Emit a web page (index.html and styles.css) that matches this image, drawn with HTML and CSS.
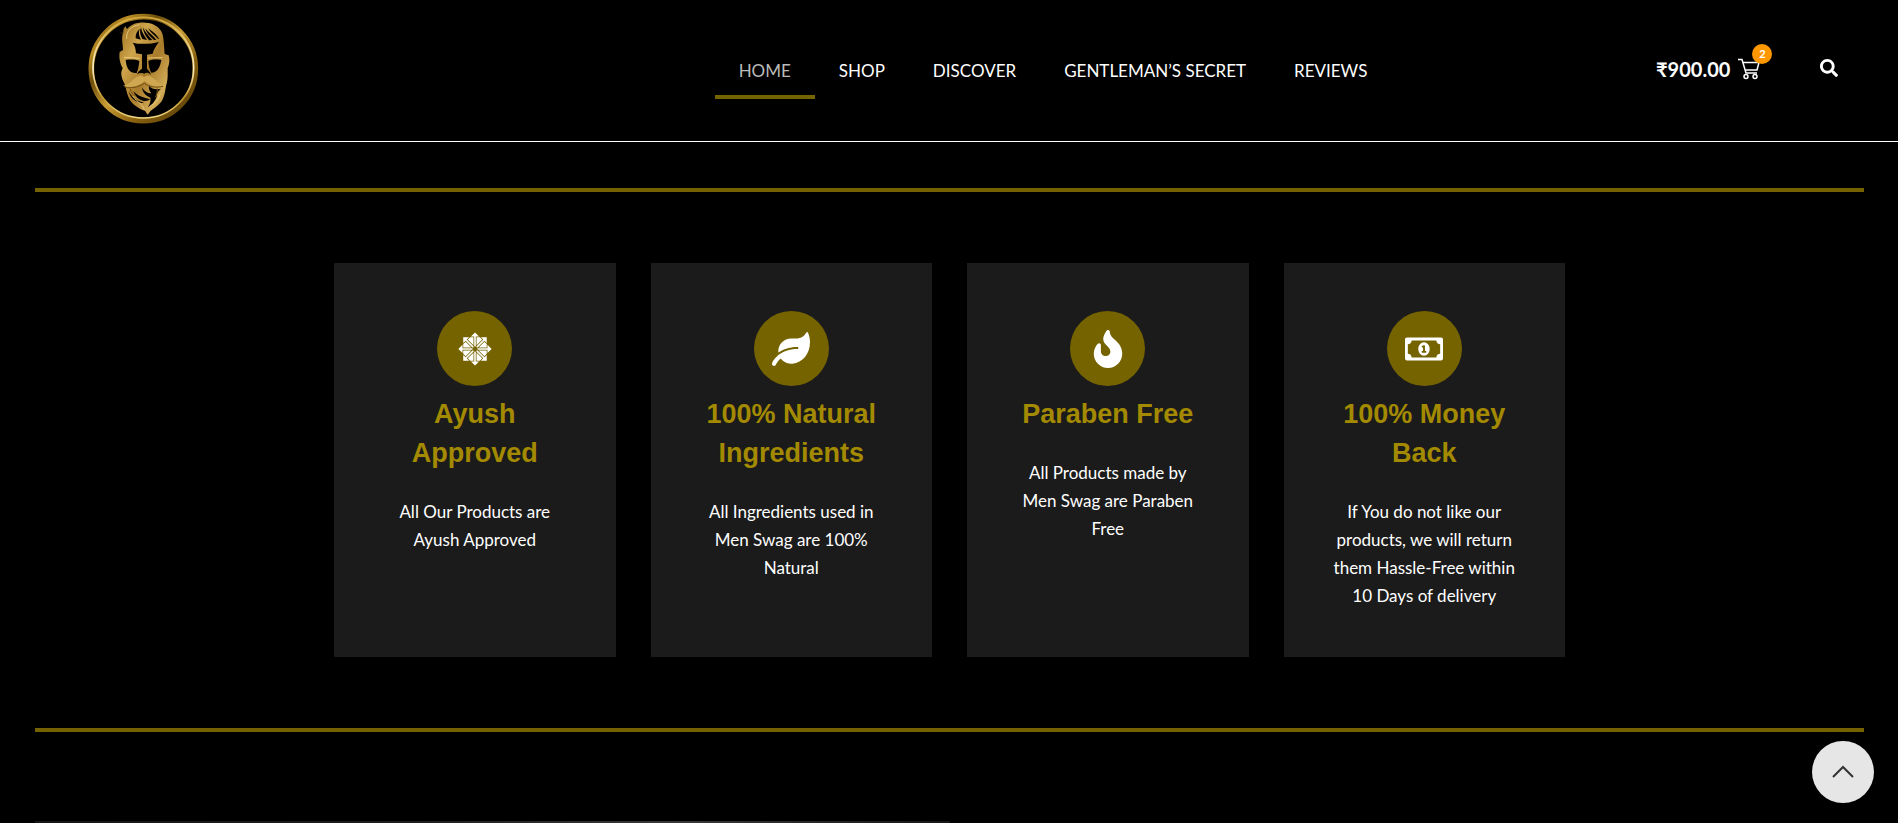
FILE: index.html
```html
<!DOCTYPE html>
<html lang="en">
<head>
<meta charset="utf-8">
<title>Men Swag</title>
<link rel="stylesheet" href="styles.css">
</head>
<body>
<header class="header">
  <a class="logo" href="#" aria-label="Men Swag">
    <svg viewBox="0 0 375 375" aria-hidden="true">
      <defs>
        <linearGradient id="ring" x1="0" y1="0" x2="1" y2="1">
          <stop offset="0" stop-color="#7a570c"/><stop offset=".18" stop-color="#b98c24"/><stop offset=".32" stop-color="#6d4e0a"/>
          <stop offset=".5" stop-color="#c89c34"/><stop offset=".7" stop-color="#8a6210"/><stop offset="1" stop-color="#4f3805"/>
        </linearGradient>
        <linearGradient id="shine" x1="0" y1="0" x2="0" y2="1">
          <stop offset="0" stop-color="#d0a73c"/><stop offset=".5" stop-color="#fff3c4"/><stop offset=".8" stop-color="#c2952c"/><stop offset="1" stop-color="#f0da86"/>
        </linearGradient>
        <linearGradient id="face" x1="0" y1="0" x2="1" y2="1">
          <stop offset="0" stop-color="#94681a"/><stop offset=".3" stop-color="#cfa54c"/><stop offset=".55" stop-color="#a87b2a"/><stop offset=".8" stop-color="#d3ac58"/><stop offset="1" stop-color="#8d6314"/>
        </linearGradient>
      </defs>
      <circle cx="190" cy="191" r="156" fill="none" stroke="url(#ring)" stroke-width="17"/>
      <circle cx="190" cy="188" r="151" fill="none" stroke="url(#shine)" stroke-width="5"/>
      <path fill="url(#face)" d="M116 84l14-1c-1-10 2-16 8-20-1 6 1 8 4 8 12-14 32-20 54-18 24 1 42 12 50 30 6 14 6 44 8 64l12 4c4 14 2 28-3 38v22c0 12-2 22-5 32-2 14-4 30-12 44-10 14-26 24-34 30l-9 12-8-12c-12-4-32-14-44-30-9-14-12-30-15-46-7-14-13-24-12-40l4-12c-7-12-12-30-9-48l10-6c0-18-6-36 0-50z"/>
      <g fill="#020100">
        <path d="M158 113c20 5 54 5 79-2-10 12-16 24-19 35l-17 3v42c8 9 12 14 12 18-8-6-14-7-20-3-7-3-15-2-22 2 3-8 7-12 15-17v-43l-18-3c-1-13-3-24-10-32z"/>
        <path d="M137 165c12-2 30-2 41 3-2 18-4 28-8 36-18 2-31-11-33-39zM205 168c12-5 25-5 39-3-4 24-13 38-30 38-5-8-8-20-9-35z"/>
        <path d="M167 100c-1-12 4-22 12-28-4 10-3 20 4 32zM187 102c-7-12-9-24-4-35 2 13 9 24 18 38zM207 106c-11-13-18-26-18-39 6 14 17 26 28 38zM222 105c-12-10-23-22-27-36 10 12 23 22 34 35zM235 102c-10-9-24-20-31-32 12 9 25 16 33 32z"/>
        <path d="M145 258c11 20 25 29 48 36-19 0-39-7-48-36zM160 258c12 14 28 20 50 24-5 6-13 7-22 5-14-4-22-13-28-29zM186 247c7 13 17 18 28 18-6-8-9-15-7-23 8 10 22 13 36 9-10 9-14 15-13 25-6 14-14 25-26 30 6-10 9-19 7-28-14-6-23-14-25-31z"/>
      </g>
      <path fill="#cfa750" d="M129 242c22-4 25-18 43-27 9-5 16-3 20 2 6-6 14-7 23-1 14 10 20 22 40 23-17 9-41 6-61-10-19 16-45 21-65 13z"/>
      <path fill="none" stroke="#6e4d10" stroke-width="3" d="M134 247c22 4 42-1 59-12 16 11 36 14 56 9M150 252c4 10 8 16 14 20M232 250c0 12-2 20-7 27"/>
      <g fill="none" stroke="#e8c878" stroke-width="3"><path d="M140 101c-2-22 13-38 39-42M132 157l47 3M204 159l44-1M158 273c18 24 28 20 35 42M240 268c-5 18-16 28-31 36"/></g>
    </svg>
  </a>
  <nav class="nav" aria-label="Main">
    <a class="nav-link current" href="#">HOME</a>
    <a class="nav-link" href="#">SHOP</a>
    <a class="nav-link" href="#">DISCOVER</a>
    <a class="nav-link" href="#">GENTLEMAN’S SECRET</a>
    <a class="nav-link" href="#">REVIEWS</a>
  </nav>
  <div class="tools">
    <a class="cart" href="#" aria-label="Cart, 2 items">
      <span>₹900.00</span>
      <span class="cart-icon">
        <svg viewBox="0 0 22 22" fill="none" stroke="currentColor" stroke-width="1.5" aria-hidden="true"><path d="M0 1.500h4l4 13.500h11M5 4.500h16l-2 7.500H7"/><circle cx="8" cy="18.500" r="2"/><circle cx="17" cy="18.500" r="2"/></svg>
        <span class="badge">2</span>
      </span>
    </a>
    <button class="search" type="button" aria-label="Search">
      <svg viewBox="0 0 512 512" fill="currentColor" aria-hidden="true"><path d="M505 442.7L405.3 343c-4.500-4.500-10.600-7-17-7H372c27.600-35.300 44-79.700 44-128C416 93.100 322.900 0 208 0S0 93.100 0 208s93.100 208 208 208c48.300 0 92.700-16.400 128-44v16.300c0 6.400 2.500 12.500 7 17l99.700 99.700c9.400 9.400 24.600 9.400 33.900 0l28.300-28.300c9.400-9.400 9.400-24.600.1-34zM208 336c-70.700 0-128-57.200-128-128 0-70.700 57.200-128 128-128 70.700 0 128 57.200 128 128 0 70.700-57.200 128-128 128z"/></svg>
    </button>
  </div>
</header>
<main class="main">
  <section class="features">
    <div class="cards">
      <article class="card">
        <span class="card-icon"><svg viewBox="0 0 448 512" fill="currentColor" aria-hidden="true"><path d="M289.6 97.5l31.6 31.7-76.3 76.5V97.5zm-162.4 31.700l76.3 76.5V97.5h-44.7zm41.5-41.600h44.7v127.900l10.8 10.8 10.8-10.8V87.600h44.7L224.2 32zm26.200 168.100l-10.8-10.8H55.5v-44.8L0 255.7l55.5 55.6v-44.8h128.6l10.8-10.8zm79.300-20.700h107.900v-44.8l-31.700-31.600zm173.300 20.700L392 200.1v44.8H264.3l-10.8 10.8 10.8 10.8H392v44.8l55.5-55.6zM65.4 176.2l32.5-31.7 90.3 90.5h15.3v-15.3l-90.3-90.5 31.6-31.7H65.4zm316.7-78.7h-78.5l31.6 31.7-90.3 90.5V235h15.3l90.3-90.5 31.6 31.7zM203.5 413.9V305.8l-76.3 76.5 31.6 31.7h44.7zM65.4 235h108.8l-76.3-76.5-32.5 31.7zm316.7 100.200l-31.6 31.7-90.3-90.5h-15.3v15.3l90.3 90.5-31.6 31.7h78.5zm0-58.8H274.2l76.3 76.5 31.6-31.7zm-60.900 105.800l-76.3-76.5v108.100h44.7zM97.9 352.9l76.3-76.5H65.4v44.8zm181.800 70.900H235V295.900l-10.8-10.8-10.8 10.8v127.900h-44.7l55.5 55.6zm-166.500-41.600l90.3-90.5v-15.3h-15.3l-90.3 90.5-32.5-31.7v78.7h79.4z"/></svg></span>
        <h2>Ayush Approved</h2>
        <p>All Our Products are Ayush Approved</p>
      </article>
      <article class="card">
        <span class="card-icon"><svg viewBox="0 0 576 512" fill="currentColor" aria-hidden="true"><path d="M546.2 9.7c-5.6-12.5-21.6-13-28.3-1.2C486.9 62.4 431.4 96 368 96h-80C182 96 96 182 96 288c0 7 .8 13.7 1.5 20.5C161.3 262.8 253.4 224 384 224c8.8 0 16 7.2 16 16s-7.2 16-16 16C132.6 256 26 410.1 2.4 468c-6.6 16.3 1.2 34.9 17.5 41.6 16.4 6.8 35-1.1 41.8-17.3 1.5-3.6 20.9-47.9 71.9-90.6 32.4 43.9 94 85.8 174.9 77.2C465.5 467.5 576 326.7 576 154.3c0-50.2-10.8-102.2-29.8-144.6z"/></svg></span>
        <h2>100% Natural Ingredients</h2>
        <p>All Ingredients used in Men Swag are 100% Natural</p>
      </article>
      <article class="card">
        <span class="card-icon"><svg viewBox="0 0 384 512" fill="currentColor" aria-hidden="true"><path d="M216 23.86c0-23.8-30.65-32.77-44.15-13.04C48 191.85 224 200 224 288c0 35.63-29.11 64.46-64.85 63.99-35.17-.45-63.15-29.77-63.15-64.94v-85.51c0-21.7-26.47-32.23-41.43-16.5C27.8 213.16 0 261.33 0 320c0 105.87 86.13 192 192 192s192-86.13 192-192c0-170.29-168-193-168-296.14z"/></svg></span>
        <h2>Paraben Free</h2>
        <p>All Products made by Men Swag are Paraben Free</p>
      </article>
      <article class="card">
        <span class="card-icon"><svg viewBox="0 0 640 512" fill="currentColor" aria-hidden="true"><path d="M320 144c-53.02 0-96 50.14-96 112 0 61.85 42.98 112 96 112 53 0 96-50.13 96-112 0-61.86-42.98-112-96-112zm40 168c0 4.42-3.58 8-8 8h-64c-4.42 0-8-3.58-8-8v-16c0-4.42 3.58-8 8-8h16v-55.44l-.47.31a7.992 7.992 0 0 1-11.09-2.22l-8.88-13.31a7.992 7.992 0 0 1 2.22-11.09l15.33-10.22a23.99 23.99 0 0 1 13.31-4.03H328c4.42 0 8 3.58 8 8V288h16c4.42 0 8 3.58 8 8v16zM608 64H32C14.33 64 0 78.33 0 96v320c0 17.67 14.33 32 32 32h576c17.67 0 32-14.33 32-32V96c0-17.67-14.33-32-32-32zm-16 272c-35.35 0-64 28.65-64 64H112c0-35.35-28.65-64-64-64V176c35.35 0 64-28.65 64-64h416c0 35.35 28.65 64 64 64v160z"/></svg></span>
        <h2>100% Money Back</h2>
        <p>If You do not like our products, we will return them Hassle-Free within 10 Days of delivery</p>
      </article>
    </div>
  </section>
  <section class="slide"></section>
</main>
<a class="to-top" href="#" aria-label="Back to top">
  <svg viewBox="0 0 22 14" fill="none" stroke="currentColor" stroke-width="2" aria-hidden="true"><path d="M1 12l10-10 10 10"/></svg>
</a>
</body>
</html>
```
FILE: styles.css
```css
* {
  box-sizing: border-box;
}

body {
  margin: 0;
  background: #000;
  color: #fff;
  font: 17px/28px Lato, sans-serif;
}

a {
  color: inherit;
  text-decoration: none;
}

svg {
  display: block;
}

.header {
  display: grid;
  grid-template-columns: 466px 1fr 258px;
  align-items: center;
  padding: 5px 0 11px;
  border-bottom: 1px solid #fff;
}

.logo {
  width: 125px;
  margin-left: 80px;
}

.nav {
  display: flex;
  justify-content: center;
}

.nav-link {
  padding: 20px 24px 10px;
  border-bottom: 4px solid transparent;
  white-space: nowrap;
}

.nav-link.current {
  color: #bababa;
  border-color: #756300;
}

.tools {
  display: flex;
  align-items: center;
  justify-content: space-between;
  padding: 0 60px 0 16px;
}

.cart {
  display: flex;
  align-items: center;
  gap: 8px;
  padding-top: 2px;
  font-size: 20px;
  font-weight: 700;
}

.cart-icon {
  position: relative;
  width: 22px;
}

.badge {
  position: absolute;
  top: -14px;
  left: 14px;
  width: 20px;
  border-radius: 50%;
  background: #ff9800;
  font-size: 11px;
  line-height: 20px;
  text-align: center;
}

.search {
  width: 18px;
  padding: 0;
  border: 0;
  background: none;
  color: #fff;
}

.main {
  padding: 46px 34px 0 35px;
}

.features {
  padding: 71px 0;
  border: solid #756300;
  border-width: 4px 0;
}

.cards {
  display: grid;
  grid-template-columns: repeat(4, 1fr);
  gap: 35px;
  max-width: 1231px;
  margin: 0 auto;
}

.card {
  display: flex;
  flex-direction: column;
  align-items: center;
  padding: 48px 48px 47px;
  background: #1b1b1b;
  text-align: center;
}

.card-icon {
  display: grid;
  place-items: center;
  width: 75px;
  height: 75px;
  border-radius: 50%;
  background: #756300;
}

.card-icon svg {
  width: 38px;
  height: 38px;
}

.card h2 {
  margin: 9px 0 25px;
  color: #a38a00;
  font: bold 27px/39px "Liberation Sans", Arial, sans-serif;
}

.card p {
  margin: 0;
}

.slide {
  width: 50%;
  height: 2px;
  margin-top: 89px;
  background: linear-gradient(90deg, #161616, #1c1c1c 40%, #383838 70%, #161616);
}

.to-top {
  position: fixed;
  right: 24px;
  bottom: 20px;
  display: grid;
  place-items: center;
  width: 62px;
  height: 62px;
  border-radius: 50%;
  background: #e6e6e6;
  color: #333;
}

.to-top svg {
  width: 22px;
}
```
